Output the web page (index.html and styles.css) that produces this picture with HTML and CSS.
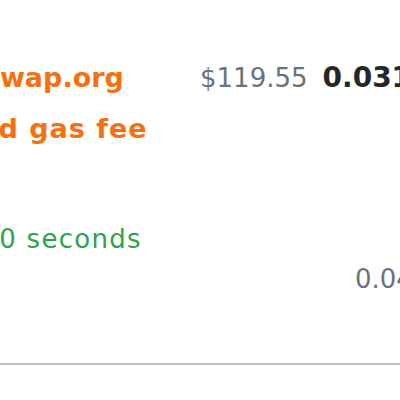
FILE: index.html
```html
<!DOCTYPE html>
<html lang="en">
<head>
  <meta charset="UTF-8">
  <meta name="viewport" content="width=device-width, initial-scale=1.0">
  <title>Gas fee</title>
  <link rel="stylesheet" href="styles.css">
</head>
<body>
  <div class="panel">
    <div class="gas-row">
      <!-- left: who suggested the fee + timing -->
      <div class="label-col">
        <div class="site">
          <span class="site-name">app.uniswap.org</span>
          <span class="site-note">suggested gas fee</span>
        </div>
        <div class="time">Likely in &lt; 30 seconds</div>
      </div>
      <!-- right: amounts -->
      <div class="amount-col">
        <div class="amounts">
          <span class="fiat">$119.55</span>
          <span class="eth">0.031739 ETH</span>
        </div>
        <div class="max">0.04132 ETH</div>
      </div>
    </div>
    <div class="divider"></div>
  </div>
</body>
</html>
```

FILE: styles.css
```css
/* Base */
* {
  margin: 0;
  padding: 0;
  box-sizing: border-box;
  font-family: 'DejaVu Sans', 'Noto Sans', sans-serif;
}
body {
  background: #fff;
  overflow: hidden;
  width: 400px;
  height: 400px;
}
.panel {
  width: 900px;
  margin-left: -131px;
  padding-top: 52px;
}
.gas-row {
  display: flex;
  align-items: flex-start;
}
.label-col {
  width: 331px;
  flex-shrink: 0;
}
.site {
  font-size: 27px;
  line-height: 51px;
  font-weight: 700;
  color: #f7700f;
  white-space: nowrap;
}
.site-name,
.site-note {
  display: block;
}
.site-note {
  margin-left: -18px;
  letter-spacing: 1px;
}
.time {
  margin-top: 70px;
  margin-left: -48px;
  font-size: 26px;
  line-height: 30px;
  letter-spacing: 1.3px;
  color: #2aa44a;
  white-space: nowrap;
}
.amount-col {
  flex: 1;
}
.amounts {
  display: flex;
  align-items: baseline;
  gap: 15px;
  line-height: 51px;
  white-space: nowrap;
}
.fiat {
  font-size: 26px;
  color: #6a737d;
}
.eth {
  font-size: 28px;
  color: #24272a;
  font-weight: 700;
}
.max {
  margin-top: 160px;
  margin-left: 155px;
  font-size: 26px;
  line-height: 30px;
  color: #6a737d;
  white-space: nowrap;
}
.divider {
  height: 2px;
  margin-top: 69px;
  background: #bbc0c5;
}
```
